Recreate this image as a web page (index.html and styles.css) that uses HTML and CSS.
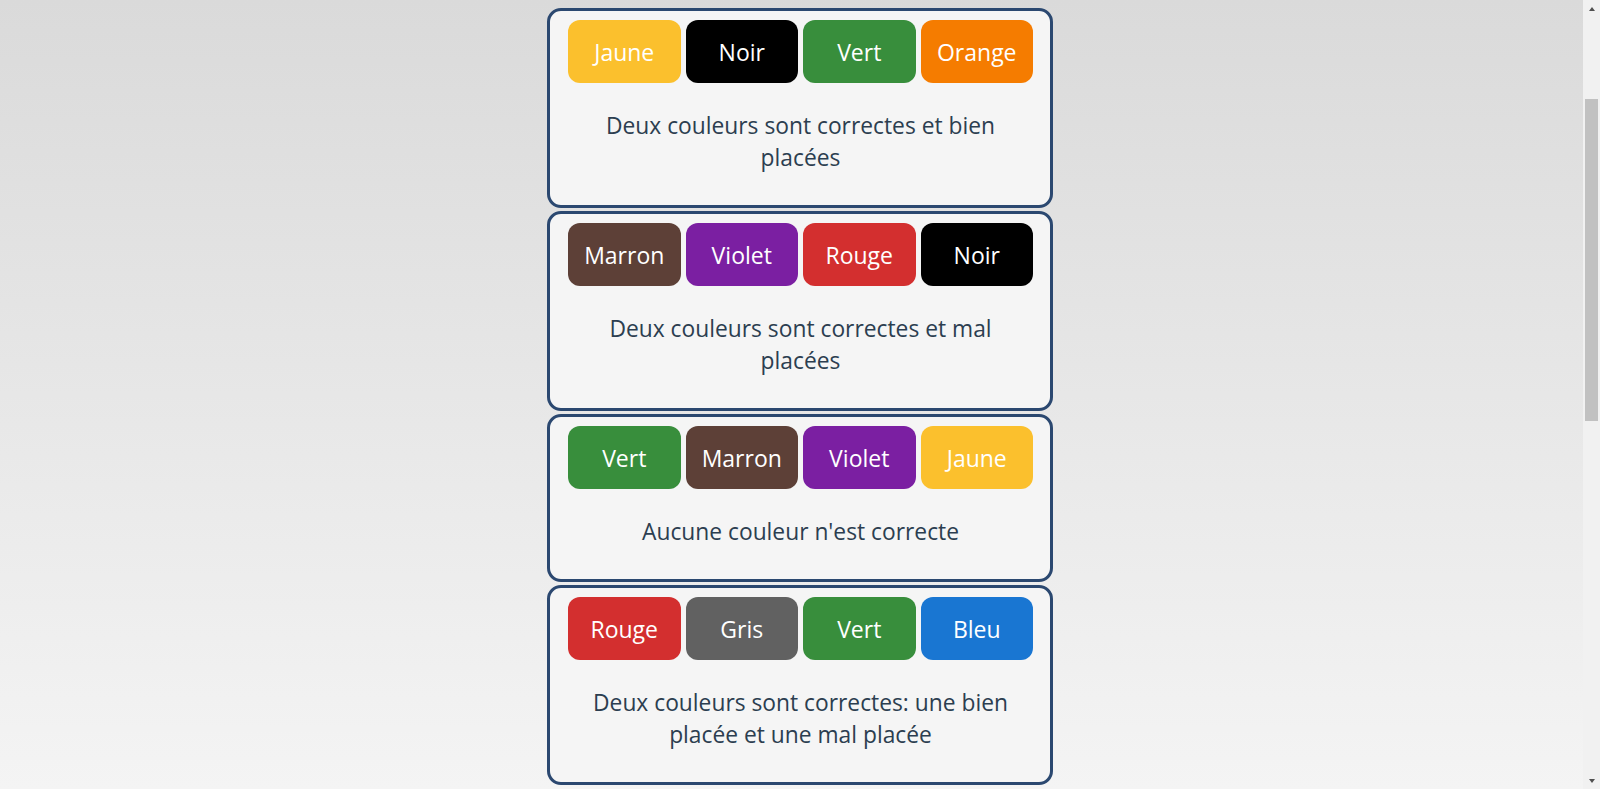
FILE: index.html
```html
<!DOCTYPE html>
<html lang="fr">
<head>
<meta charset="utf-8">
<title>Indices</title>
<link rel="stylesheet" href="styles.css">
</head>
<body>
<main class="clues">
  <section class="clue">
    <div class="pegs">
      <span class="peg jaune">Jaune</span>
      <span class="peg noir">Noir</span>
      <span class="peg vert">Vert</span>
      <span class="peg orange">Orange</span>
    </div>
    <p class="hint">Deux couleurs sont correctes et bien placées</p>
  </section>
  <section class="clue">
    <div class="pegs">
      <span class="peg marron">Marron</span>
      <span class="peg violet">Violet</span>
      <span class="peg rouge">Rouge</span>
      <span class="peg noir">Noir</span>
    </div>
    <p class="hint">Deux couleurs sont correctes et mal placées</p>
  </section>
  <section class="clue">
    <div class="pegs">
      <span class="peg vert">Vert</span>
      <span class="peg marron">Marron</span>
      <span class="peg violet">Violet</span>
      <span class="peg jaune">Jaune</span>
    </div>
    <p class="hint">Aucune couleur n'est correcte</p>
  </section>
  <section class="clue">
    <div class="pegs">
      <span class="peg rouge">Rouge</span>
      <span class="peg gris">Gris</span>
      <span class="peg vert">Vert</span>
      <span class="peg bleu">Bleu</span>
    </div>
    <p class="hint">Deux couleurs sont correctes: une bien placée et une mal placée</p>
  </section>
</main>
<div class="scrollbar" aria-hidden="true">
  <span class="arrow up"></span>
  <span class="thumb"></span>
  <span class="track-rest"></span>
  <span class="arrow down"></span>
</div>
</body>
</html>
```
FILE: styles.css
```css
html {
  background: linear-gradient(#dadada, #f4f4f4) fixed;
  min-height: 100%;
}
body {
  margin: 0;
  padding: 8px 0;
  font-family: "Open Sans", "Liberation Sans", sans-serif;
  color: #2c3e50;
}
.clues {
  width: 506px;
  margin: 0 auto;
  display: flex;
  flex-direction: column;
  gap: 3px;
}
.clue {
  box-sizing: border-box;
  width: 506px;
  border: 3px solid #2b4870;
  border-radius: 14px;
  background: #f5f5f5;
  padding: 9px 17px 0 18px;
}
.pegs {
  display: flex;
  gap: 5px;
}
.peg {
  flex: 1;
  height: 63px;
  border-radius: 12px;
  display: flex;
  align-items: center;
  justify-content: center;
  color: #ffffff;
  font-size: 23px;
}
.hint {
  margin: 27px auto 31px;
  max-width: 440px;
  text-align: center;
  font-size: 22.8px;
  line-height: 32px;
}
.jaune { background: #fbc02d; }
.noir { background: #000000; }
.vert { background: #388e3c; }
.orange { background: #f57c00; }
.marron { background: #5d4037; }
.violet { background: #7b1fa2; }
.rouge { background: #d32f2f; }
.gris { background: #616161; }
.bleu { background: #1976d2; }

/* imitation of the browser scrollbar seen in the screenshot */
.scrollbar {
  position: fixed;
  top: 0;
  right: 0;
  width: 17px;
  height: 100vh;
  background: #f1f1f1;
  display: flex;
  flex-direction: column;
  align-items: center;
}
.arrow {
  flex: 0 0 17px;
  width: 17px;
  display: flex;
  justify-content: center;
}
.arrow::before {
  content: "";
  width: 0;
  height: 0;
  border-left: 3.5px solid transparent;
  border-right: 3.5px solid transparent;
}
.arrow.up { align-items: flex-start; padding-top: 7px; box-sizing: border-box; }
.arrow.up::before { border-bottom: 4px solid #505050; }
.arrow.down { align-items: flex-end; padding-bottom: 6px; box-sizing: border-box; }
.arrow.down::before { border-top: 4px solid #505050; }
.thumb {
  margin-top: 82px;
  width: 13px;
  height: 322px;
  background: #c1c1c1;
}
.track-rest { flex: 1; }
```
